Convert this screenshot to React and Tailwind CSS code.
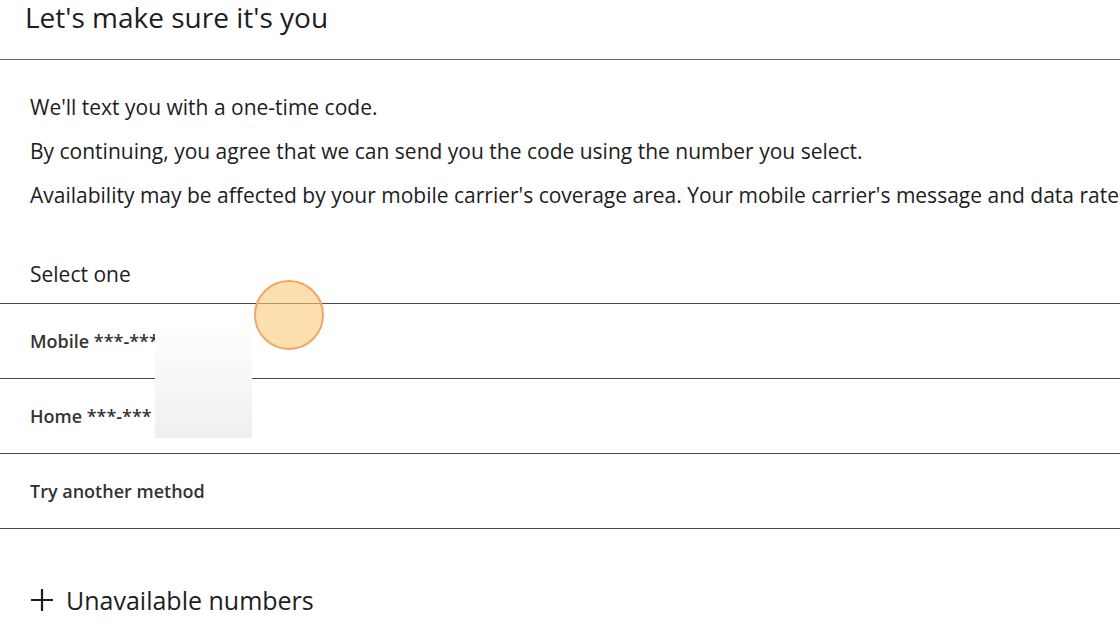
export default function App() {
  const font = { fontFamily: '"Open Sans", "Noto Sans", sans-serif' };
  return (
    <div className="w-[1120px] h-[630px] overflow-hidden bg-white relative text-[#1d1d1d]" style={font}>
      <div className="h-[60px] border-b border-[#6b6b6b] pl-[25px]">
        <h1 className="text-[28px] leading-[34px] font-normal whitespace-nowrap">Let's make sure it's you</h1>
      </div>
      <div className="pl-[30px] pt-[35px] flex flex-col gap-[19px] text-[21px] leading-[25px] whitespace-nowrap">
        <p>We'll text you with a one-time code.</p>
        <p>By continuing, you agree that we can send you the code using the number you select.</p>
        <p>Availability may be affected by your mobile carrier's coverage area. Your mobile carrier's message and data rates may apply.</p>
      </div>
      <div className="pl-[30px] pt-[54px] pb-[16px] text-[21px] leading-[25px]">Select one</div>
      <div className="border-t border-[#4a4a4a]">
        {["Mobile ***-***", "Home ***-***", "Try another method"].map((t) => (
          <div key={t} className="h-[75px] border-b border-[#4a4a4a] pl-[30px] flex items-center text-[18px] font-semibold text-[#333]">
            {t}
          </div>
        ))}
      </div>
      <div className="pl-[30px] pt-[55px] flex items-center gap-[12px] text-[25px] leading-[32px]">
        <svg width="24" height="24" viewBox="0 0 24 24" fill="none" stroke="#1d1d1d" strokeWidth="2.2">
          <path d="M12 1v22M1 12h22" />
        </svg>
        <span>Unavailable numbers</span>
      </div>
      <div className="absolute left-[155px] top-[322px] w-[97px] h-[116px] bg-gradient-to-b from-white to-[#efefef]" />
      <div className="absolute left-[254px] top-[280px] w-[70px] h-[70px] rounded-full bg-[#fcc97a]/60 border-2 border-[#f0a766]" />
    </div>
  );
}
